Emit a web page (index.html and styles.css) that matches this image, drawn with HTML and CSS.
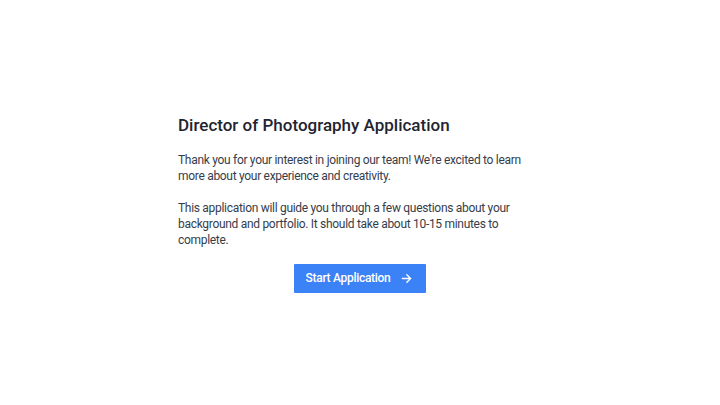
FILE: index.html
```html
<!DOCTYPE html>
<html lang="en">
<head>
  <meta charset="UTF-8" />
  <meta name="viewport" content="width=device-width, initial-scale=1.0" />
  <title>Director of Photography Application</title>
  <link rel="stylesheet" href="styles.css">
</head>
<body>
  <div class="intro">
    <h1>Director of Photography Application</h1>
    <p>Thank you for your interest in joining our team! We're excited to learn more about your experience and creativity.</p>
    <p>This application will guide you through a few questions about your background and portfolio. It should take about 10-15 minutes to complete.</p>
    <div class="actions">
      <button class="start-btn">
        Start Application
        <svg width="11" height="11" viewBox="0 0 16 16" fill="none" stroke="currentColor" stroke-width="2" stroke-linecap="round" stroke-linejoin="round">
          <path d="M2 8h12M8.5 2.5 14 8l-5.5 5.5"/>
        </svg>
      </button>
    </div>
  </div>
</body>
</html>
```

FILE: styles.css
```css
* {
  margin: 0;
  padding: 0;
  box-sizing: border-box;
}

body {
  font-family: Roboto, "Noto Sans", sans-serif;
  background: #fff;
  height: 100vh;
  display: flex;
  justify-content: center;
  align-items: center;
  color: #363d4a;
}

.intro {
  width: 364px;
}

.intro h1 {
  font-size: 17px;
  font-weight: 500;
  line-height: 24px;
  color: #1f2430;
  margin-bottom: 15px;
}

.intro p {
  font-size: 12px;
  line-height: 16px;
  letter-spacing: -0.3px;
  margin-bottom: 16px;
}

.actions {
  display: flex;
  justify-content: center;
  margin-top: 16px;
}

.start-btn {
  display: flex;
  align-items: center;
  gap: 11px;
  background: #3b82f6;
  color: #fff;
  border: none;
  border-radius: 1px;
  height: 29px;
  padding: 0 14px 0 12px;
  font-family: inherit;
  font-size: 12px;
  font-weight: 500;
  letter-spacing: -0.3px;
  cursor: pointer;
}
```
